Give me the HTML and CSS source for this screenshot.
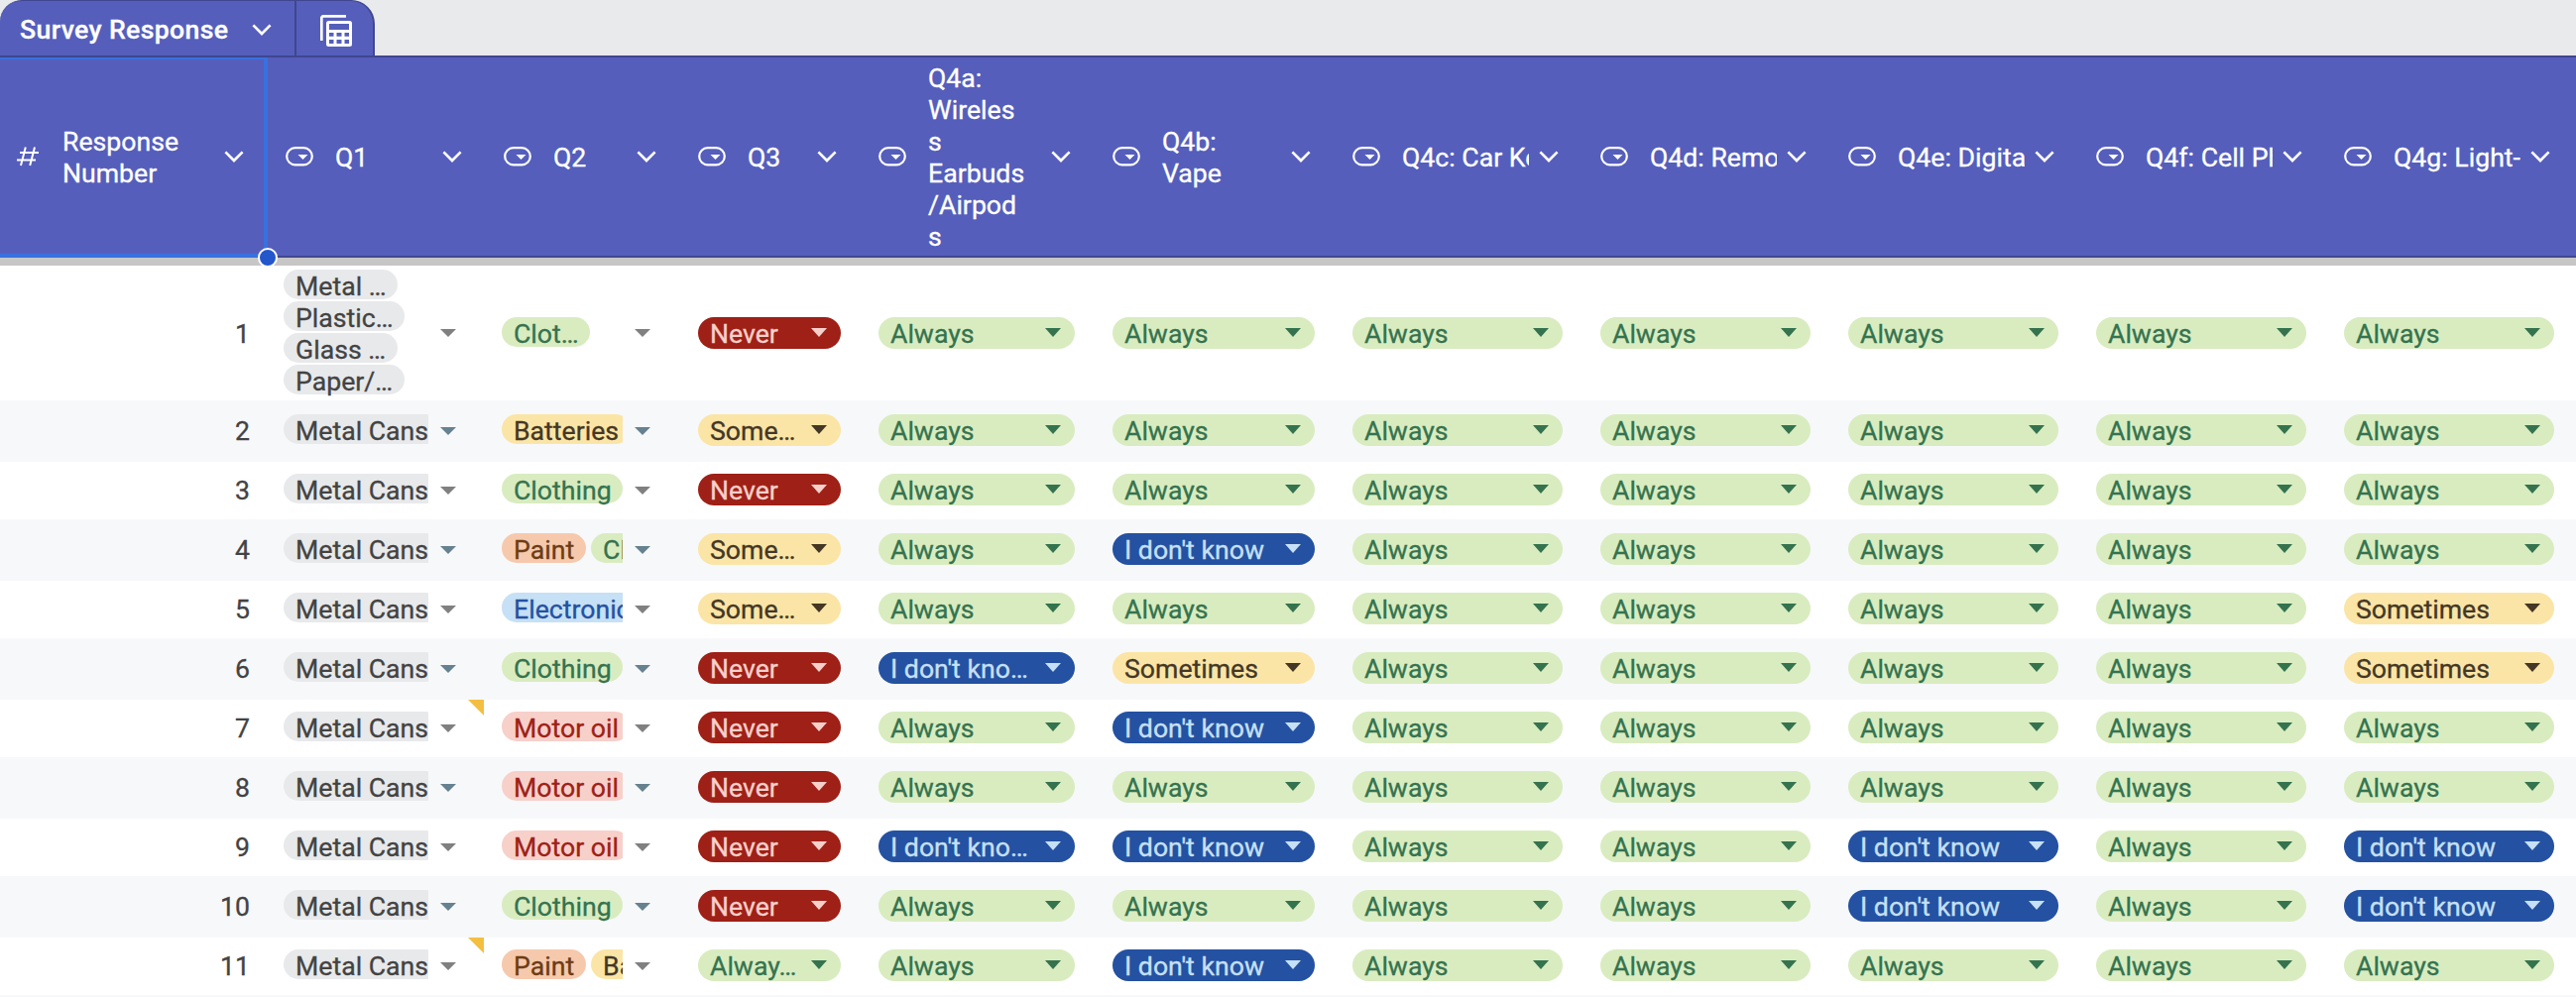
FILE: index.html
```html
<!DOCTYPE html>
<html lang="en">
<head>
<meta charset="utf-8">
<title>Survey Response</title>
<link rel="stylesheet" href="styles.css">
</head>
<body>
<svg class="defs" aria-hidden="true">
  <symbol id="chev" viewBox="0 0 20 12"><path d="M1.4 1.4 10 10 18.6 1.4" fill="none" stroke="currentColor" stroke-width="2.7"/></symbol>
  <symbol id="drop" viewBox="0 0 28 20"><rect x="1.2" y="1.2" width="25.6" height="17.1" rx="8.5" fill="none" stroke="currentColor" stroke-width="2.2"/><path d="M12.5 8h10l-5 5z" fill="currentColor"/></symbol>
  <symbol id="hash" viewBox="0 0 22 20"><path d="M3 6h19M0 13.4h19M8.8 0.5 4 19M18 0.5 13.2 19" fill="none" stroke="currentColor" stroke-width="2"/></symbol>
</svg>
<div class="tabs">
  <div class="tab title"><span>Survey Response</span><svg class="chev"><use href="#chev"/></svg></div>
  <div class="tab view">
    <svg class="grid-icon" viewBox="0 0 32 32"><path d="M1.3 26V3.3a2 2 0 0 1 2-2H26" fill="none" stroke="#fff" stroke-width="2.7"/><path fill="#fff" fill-rule="evenodd" d="M8.5 6h21a2.5 2.5 0 0 1 2.5 2.5v21a2.5 2.5 0 0 1-2.5 2.5h-21a2.5 2.5 0 0 1-2.5-2.5v-21a2.5 2.5 0 0 1 2.5-2.5zM9 9v6h20V9zM9 18v3.700h4.500V18zM16.500 18v3.700H21.500V18zM24.500 18v3.700H29V18zM9 25v4h4.500v-4zM16.500 25v4H21.500v-4zM24.500 25v4H29v-4z"/></svg>
  </div>
</div>
<div class="head" id="head"></div>
<div class="freeze"></div>
<div id="rows"></div>
<script src="table.js"></script>
</body>
</html>
```
FILE: styles.css
```css
* { box-sizing: border-box; }
body {
  margin: 0;
  height: 1006px;
  overflow: hidden;
  background: #fff;
  color: #434343;
  font: 26.67px/32px Roboto, sans-serif;
  -webkit-text-stroke: 0.3px;
}
svg { display: block; flex: none; }
.defs { position: absolute; width: 0; height: 0; }
.tabs { display: flex; height: 56px; background: #e8eaeb; }
.tab { display: flex; align-items: center; background: #555ebb; color: #fff; border-top: 1px solid #40468f; }
.title { width: 299px; padding: 3px 23px 0 20px; justify-content: space-between; font-weight: 500; letter-spacing: 0.35px; border-radius: 22px 0 0 0; border-right: 2px solid #40468f; }
.view { width: 79px; padding: 0 0 0 24px; border-right: 2px solid #40468f; border-radius: 0 24px 0 0; }
.grid-icon { width: 32px; height: 32px; margin-top: 4px; }
.chev { width: 20px; height: 12px; }

.head, .row {
  display: grid;
  grid-template-columns: 272px 220px 196px 182px 236px 242px repeat(5, 250px);
}
.head { height: 204px; background: #555ebb; color: #fff; border: solid #40468f; border-width: 2px 0; }
.th { position: relative; display: flex; align-items: center; padding: 0 26px 0 16px; }
.th .label { flex: 1; min-width: 0; padding-top: 1px; margin: 0 10px 0 22px; overflow-wrap: anywhere; }
.th .nowrap { white-space: nowrap; overflow: hidden; }
.drop { width: 28px; height: 20px; }
.hash { width: 22px; height: 20px; }
.th.selected { padding-left: 17px; }
.selected .label { margin-left: 24px; }
.selected::after { content: ""; position: absolute; inset: 0 2px -2px 0; border: solid #3871e0; border-width: 2px 4px 4px 0; }
.handle { position: absolute; right: -8px; bottom: -12px; z-index: 2; width: 20px; height: 20px; border: 2px solid #fff; border-radius: 50%; background: #2456cc; }
.freeze { height: 8px; background: #c6c6c6; }

.row { height: 60px; border-bottom: 2px solid #f7f8fa; }
.row.tall { height: 138px; }
.row:nth-child(even) { background: #f7f8fa; }
.num { padding: 13px 20px 0 0; text-align: right; }
.cell { position: relative; padding: 12px 22px 0 16px; }
.tall .num { padding-top: 53px; }
.tall .cell { padding-top: 52px; }
.pill { display: flex; justify-content: space-between; align-items: center; height: 32px; border-radius: 16px; padding: 1px 14px 0 12px; white-space: nowrap; }
.arrow { width: 16px; height: 9px; background: currentColor; clip-path: polygon(0 0, 100% 0, 50% 100%); }
.pill .arrow { margin-bottom: 2px; }
.cell.multi { display: flex; align-items: flex-start; gap: 12px; padding: 12px 32px 0 14px; }
.tall .cell.multi { padding-top: 52px; }
.tall .cell.stack { padding-top: 4px; }
.chips { flex: 1; min-width: 0; display: flex; gap: 5.5px; overflow-x: clip; }
.stack .chips { flex-direction: column; align-items: flex-start; gap: 2px; }
.chip { flex: none; height: 30px; border-radius: 15px; padding: 1px 11.5px 0 12px; white-space: nowrap; }
.multi .arrow { height: 8px; margin-top: 13px; color: #808080; }
.tall .multi .arrow { margin-top: 12px; }
.tall .stack .arrow { margin-top: 60px; }
.row:nth-child(even) .multi .arrow { color: #66818f; }
.note::after { content: ""; position: absolute; top: 0; right: 4px; width: 16px; height: 16px; background: #f3bf42; clip-path: polygon(0 0, 100% 0, 100% 100%); }

.green { background: #d9ecc0; color: #35734f; }
.red { background: #9e2017; color: #f7d0ca; }
.yellow { background: #fbe5a6; color: #443725; }
.blue { background: #2451a1; color: #c6e0f5; }
.gray { background: #e8e9eb; color: #434343; }
.orange { background: #f6c9ad; color: #6d3c14; }
.pink { background: #f7d0ca; color: #9e2017; }
.sky { background: #c6e0f5; color: #2451a1; }
```
FILE: table.js
```js
const headers = ['Response Number', 'Q1', 'Q2', 'Q3', 'Q4a: Wireless Earbuds/Airpods', 'Q4b: Vape',
  'Q4c: Car Keys', 'Q4d: Remote', 'Q4e: Digital', 'Q4f: Cell Phone', 'Q4g: Light-up'];
const wrapped = { 0: 'Response<br>Number', 4: 'Q4a:<br>Wireles<br>s<br>Earbuds<br>/Airpod<br>s', 5: 'Q4b:<br>Vape' };
const arrow = '<span class="arrow"></span>';
const answers = {
  A: ['green', 'Always'], a: ['green', 'Alway…'], N: ['red', 'Never'],
  S: ['yellow', 'Sometimes'], s: ['yellow', 'Some…'], I: ['blue', "I don't know"], i: ['blue', "I don't kno…"]
};
const items = {
  'Clot…': 'green', Clothing: 'green', Batteries: 'yellow', Paint: 'orange', Electronics: 'sky', 'Motor oil': 'pink'
};
// Each row: Q2 selections, then one letter per answer from Q3 to Q4g.
const data = [
  [['Clot…'], 'NAAAAAAA'], [['Batteries'], 'sAAAAAAA'], [['Clothing'], 'NAAAAAAA'],
  [['Paint', 'Clothing'], 'sAIAAAAA'], [['Electronics'], 'sAAAAAAS'], [['Clothing'], 'NiSAAAAS'],
  [['Motor oil'], 'NAIAAAAA'], [['Motor oil'], 'NAAAAAAA'], [['Motor oil'], 'NiIAAIAI'],
  [['Clothing'], 'NAAAAIAI'], [['Paint', 'Batteries'], 'aAIAAAAA']
];
const noted = [7, 11];
const chip = (text, color) => `<span class="chip ${color}">${text}</span>`;
const multi = (chips, extra = '') => `<div class="cell multi ${extra}"><div class="chips">${chips}</div>${arrow}</div>`;

document.getElementById('head').innerHTML = headers.map((name, i) => {
  const icon = i ? 'drop' : 'hash';
  return `<div class="th${i ? '' : ' selected'}"><svg class="${icon}"><use href="#${icon}"/></svg>` +
    `<span class="label${i > 5 ? ' nowrap' : ''}">${wrapped[i] || name}</span>` +
    `<svg class="chev"><use href="#chev"/></svg>${i ? '' : '<span class="handle"></span>'}</div>`;
}).join('');

document.getElementById('rows').innerHTML = data.map(([q2, rest], i) => {
  const n = i + 1;
  const q1 = i ? ['Metal Cans'] : ['Metal …', 'Plastic…', 'Glass …', 'Paper/…'];
  return `<div class="row${i ? '' : ' tall'}"><div class="num">${n}</div>` +
    multi(q1.map(t => chip(t, 'gray')).join(''), i ? (noted.includes(n) ? 'note' : '') : 'stack') +
    multi(q2.map(t => chip(t, items[t])).join('')) +
    [...rest].map(k => `<div class="cell"><div class="pill ${answers[k][0]}">${answers[k][1]}${arrow}</div></div>`).join('') +
    '</div>';
}).join('');
```
